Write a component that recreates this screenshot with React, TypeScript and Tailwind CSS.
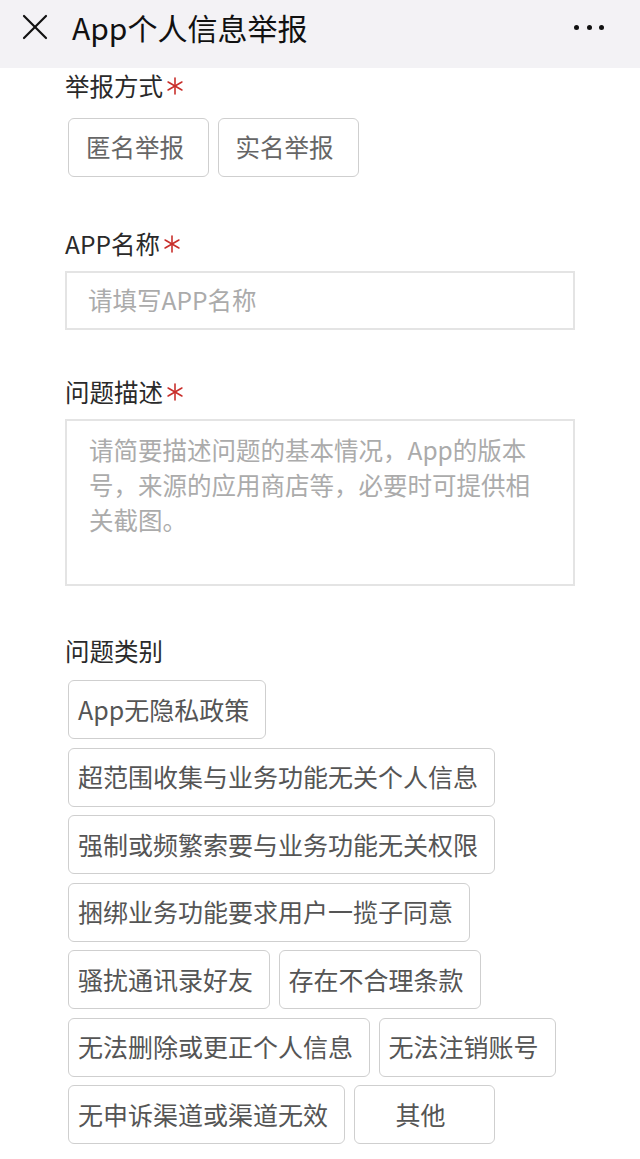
import React from "react";

const font = { fontFamily: '"Noto Sans CJK SC", "Noto Sans", sans-serif' };

function Star() {
  return (
    <svg width="18" height="18" viewBox="0 0 18 18" className="ml-[3px] shrink-0">
      <g stroke="#c9302c" strokeWidth="1.6" strokeLinecap="round">
        <line x1="9" y1="1" x2="9" y2="17" />
        <line x1="2.1" y1="5" x2="15.9" y2="13" />
        <line x1="2.1" y1="13" x2="15.9" y2="5" />
      </g>
    </svg>
  );
}

function Label({ text, required }: { text: string; required?: boolean }) {
  return (
    <div className="flex h-[32px] items-center text-[24.5px] leading-[32px] text-[#2a2a2a]">
      <span>{text}</span>
      {required && <Star />}
    </div>
  );
}

function Chip({ text, small }: { text: string; small?: boolean }) {
  return (
    <div
      className={
        "flex h-[59px] min-w-[141px] items-center justify-center whitespace-nowrap rounded-[6px] border border-[#cfcfcf] bg-white pl-[9px] pr-[16px] " +
        (small ? "text-[24.5px] text-[#666666]" : "text-[25px] text-[#555555]")
      }
    >
      {text}
    </div>
  );
}

const categories = [
  "App无隐私政策",
  "超范围收集与业务功能无关个人信息",
  "强制或频繁索要与业务功能无关权限",
  "捆绑业务功能要求用户一揽子同意",
  "骚扰通讯录好友",
  "存在不合理条款",
  "无法删除或更正个人信息",
  "无法注销账号",
  "无申诉渠道或渠道无效",
  "其他",
];

export default function App() {
  return (
    <div className="min-h-[1159px] w-[640px] bg-white" style={font}>
      {/* Header */}
      <div className="h-[68px] bg-[#f3f2f5]">
        <div className="flex h-[54px] items-center">
          <svg width="26" height="26" viewBox="0 0 26 26" className="ml-[22px]">
            <g stroke="#111" strokeWidth="2.2" strokeLinecap="round">
              <line x1="2" y1="2" x2="24" y2="24" />
              <line x1="24" y1="2" x2="2" y2="24" />
            </g>
          </svg>
          <div className="ml-[24px] text-[30px] leading-none text-[#111]">App个人信息举报</div>
          <div className="ml-auto mr-[36px] flex items-center gap-[7.5px]">
            <span className="h-[5px] w-[5px] rounded-full bg-[#111]" />
            <span className="h-[5px] w-[5px] rounded-full bg-[#111]" />
            <span className="h-[5px] w-[5px] rounded-full bg-[#111]" />
          </div>
        </div>
      </div>

      {/* Form */}
      <div className="flex flex-col px-[65px] pt-[2px]">
        <Label text="举报方式" required />
        <div className="ml-[3px] mt-[16px] flex gap-[8.5px]">
          <Chip text="匿名举报" small />
          <Chip text="实名举报" small />
        </div>

        <div className="mt-[51px]">
          <Label text="APP名称" required />
        </div>
        <div className="mt-[11px] flex h-[59px] items-center border-2 border-[#e4e4e4] pl-[21px] text-[24.5px] text-[#ababab]">
          请填写APP名称
        </div>

        <div className="mt-[46px]">
          <Label text="问题描述" required />
        </div>
        <div className="mt-[11px] h-[167px] border-2 border-[#e4e4e4] pl-[22px] pt-[11px] text-[24.5px] leading-[35px] text-[#ababab]">
          <div className="whitespace-nowrap">请简要描述问题的基本情况，App的版本</div>
          <div className="whitespace-nowrap">号，来源的应用商店等，必要时可提供相</div>
          <div className="whitespace-nowrap">关截图。</div>
        </div>

        <div className="mt-[49px]">
          <Label text="问题类别" />
        </div>
        <div className="ml-[3px] mt-[13px] flex flex-wrap gap-x-[8.5px] gap-y-[8.5px]">
          {categories.map((c) => (
            <Chip key={c} text={c} />
          ))}
        </div>
      </div>
    </div>
  );
}
